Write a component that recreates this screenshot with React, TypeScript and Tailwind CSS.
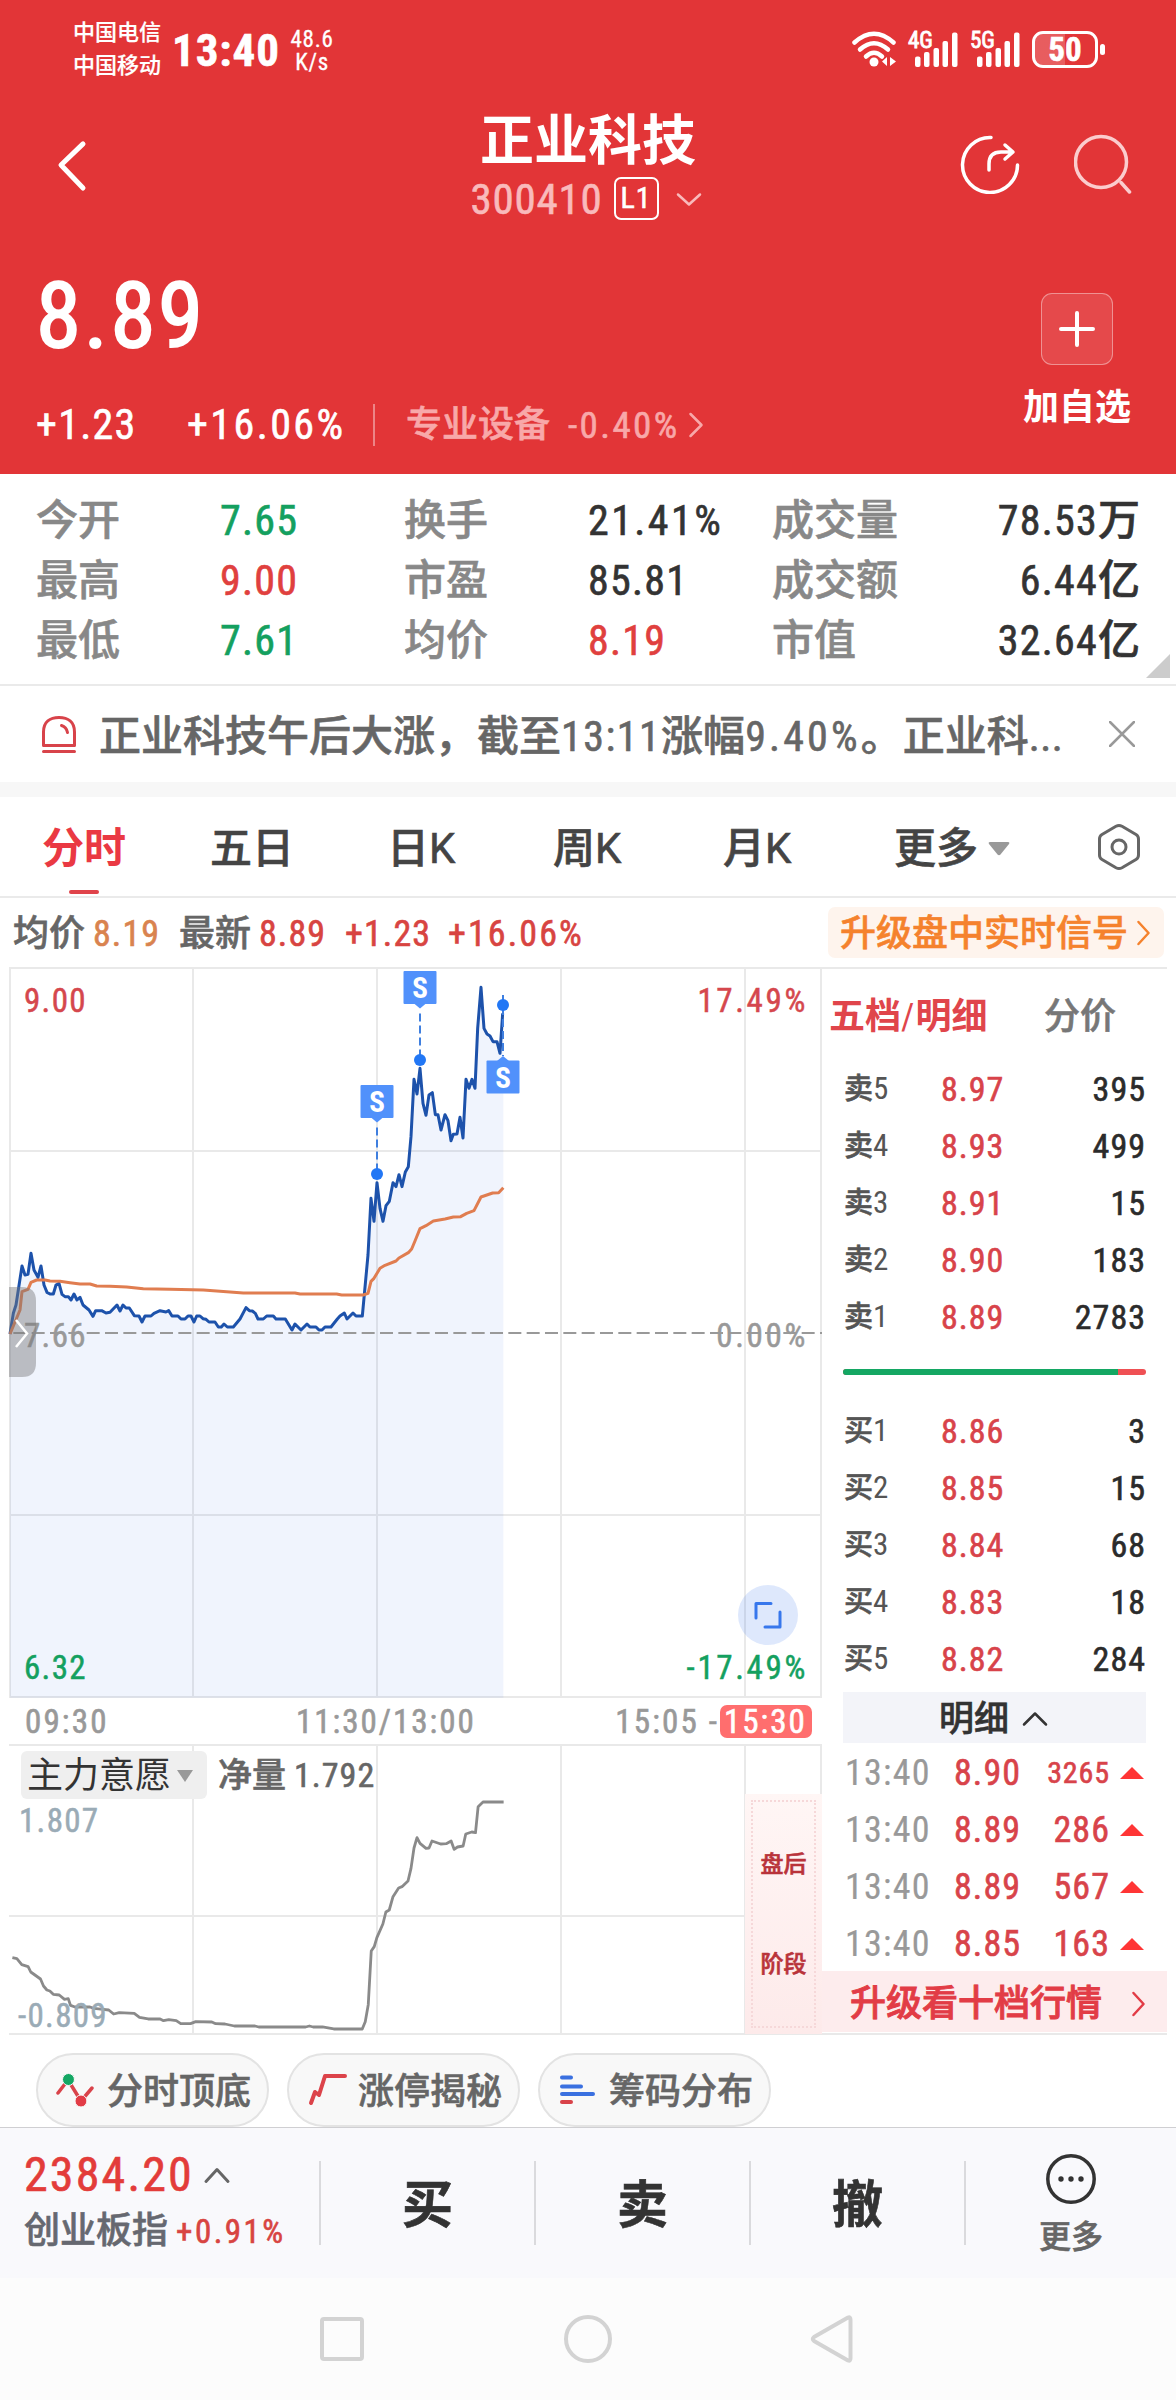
import type { ReactNode } from "react";

const stats = [
	["今开", "7.65", "text-[#14a05f]", "换手", "21.41%", "text-[#333]", "成交量", "78.53", "万"],
	["最高", "9.00", "text-[#e0403e]", "市盈", "85.81", "text-[#333]", "成交额", "6.44", "亿"],
	["最低", "7.61", "text-[#14a05f]", "均价", "8.19", "text-[#e0403e]", "市值", "32.64", "亿"],
];

const asks = [
	["5", "8.97", "395"],
	["4", "8.93", "499"],
	["3", "8.91", "15"],
	["2", "8.90", "183"],
	["1", "8.89", "2783"],
];

const bids = [
	["1", "8.86", "3"],
	["2", "8.85", "15"],
	["3", "8.84", "68"],
	["4", "8.83", "18"],
	["5", "8.82", "284"],
];

const trades = [
	["13:40", "8.90", "3265", "text-[30px]"],
	["13:40", "8.89", "286", "text-[36px]"],
	["13:40", "8.89", "567", "text-[36px]"],
	["13:40", "8.85", "163", "text-[36px]"],
];

// Series are kept in thirds of a pixel
const priceLine =
	"30,1122 40,1060 48,1035 66,918 75,945 84,943 93,880 102,930 114,952 123,918 132,975 141,997 150,1002 160,1002 168,975 177,970 186,1003 195,1010 205,1010 213,1020 222,1002 231,1020 240,1012 249,1035 267,1050 279,1069 287,1052 305,1052 318,1059 330,1057 351,1035 360,1053 369,1035 378,1044 388,1044 403,1067 417,1068 426,1086 435,1068 453,1068 462,1060 480,1052 498,1056 506,1052 516,1068 534,1068 543,1077 555,1077 564,1068 573,1068 582,1086 590,1068 600,1068 609,1076 618,1078 627,1086 645,1086 655,1101 664,1101 672,1092 682,1101 700,1101 720,1077 738,1043 748,1052 757,1053 766,1060 774,1077 790,1077 800,1068 820,1068 828,1077 856,1077 876,1110 885,1092 903,1110 921,1092 930,1101 948,1101 957,1110 966,1110 975,1101 993,1101 1012,1077 1020,1068 1033,1059 1041,1077 1059,1059 1068,1068 1087,1068 1104,885 1113,715 1122,784 1131,668 1140,745 1149,784 1158,737 1168,724 1179,668 1188,680 1197,644 1206,680 1216,636 1225,620 1233,530 1242,358 1251,402 1260,325 1269,430 1278,466 1287,405 1297,398 1306,464 1314,464 1323,510 1335,464 1344,482 1353,542 1360,523 1371,522 1380,472 1389,534 1398,358 1407,385 1416,358 1425,385 1433,205 1443,82 1452,205 1461,222 1470,228 1479,245 1491,245 1500,280 1508,160";

const averageLine =
	"30,1122 60,1050 66,995 84,988 93,967 110,960 135,960 150,963 180,964 210,968 240,972 270,972 290,978 330,979 380,981 430,986 510,988 610,990 680,995 730,999 885,999 900,1002 1010,1002 1025,1005 1090,1005 1104,1000 1113,964 1122,955 1140,925 1155,916 1188,903 1197,894 1225,878 1235,867 1245,843 1260,806 1278,797 1300,783 1335,777 1360,771 1382,770 1400,760 1422,752 1443,711 1478,699 1496,698 1510,683";

const netLine =
	"33,893 45,896 58,914 75,920 82,936 108,957 116,978 125,990 133,993 142,1003 158,1005 172,1018 182,1016 188,1036 200,1041 240,1041 250,1045 275,1048 290,1050 303,1062 318,1058 358,1060 372,1072 395,1077 427,1077 436,1082 450,1079 470,1082 482,1091 508,1091 522,1085 565,1086 575,1091 600,1092 625,1098 680,1098 690,1101 815,1101 825,1098 835,1101 860,1101 890,1107 966,1107 974,1085 982,1034 990,873 998,860 1005,833 1021,792 1029,756 1038,750 1048,710 1063,684 1072,680 1088,663 1096,625 1104,564 1112,533 1120,550 1136,565 1144,564 1152,543 1175,552 1190,551 1203,543 1211,568 1220,561 1235,558 1242,522 1258,516 1268,518 1275,440 1288,426 1343,426";

function Num({ className = "", tracking, children }: { className?: string; tracking?: string; children: ReactNode }) {
	const isPercent = typeof children === "string" && children.endsWith("%");
	const spacing = tracking ?? (isPercent ? "tracking-[0.058em]" : "tracking-[0.03em]");
	return <span className={`font-normal whitespace-nowrap ${spacing} ${className}`}>{children}</span>;
}

function Chevron({ d, className, width = 3 }: { d: string; className: string; width?: number }) {
	return (
		<svg viewBox="0 0 24 24" className={className} fill="none" stroke="currentColor" strokeWidth={width} strokeLinecap="round" strokeLinejoin="round" overflow="visible" preserveAspectRatio="none">
			<path d={d} vectorEffect="non-scaling-stroke" />
		</svg>
	);
}

const RIGHT = "M1 0L23 12L1 24";
const DOWN = "M0 1L12 23L24 1";
const UP = "M0 23L12 1L24 23";

function SignalBars() {
	return (
		<svg viewBox="0 0 44 36" className="h-9 w-11" fill="currentColor">
			<rect x="0" y="24.500" width="5.500" height="10.500" rx="2" />
			<rect x="9" y="20" width="5.500" height="15" rx="2" />
			<rect x="18.500" y="16" width="5.500" height="19" rx="2" />
			<rect x="27.500" y="9" width="5.500" height="26" rx="2" />
			<rect x="37" y="0.500" width="5.500" height="34.500" rx="2" />
		</svg>
	);
}

function StatusBar() {
	return (
		<div className="flex h-[100px] pl-[73px] text-white">
			<div className="mt-[16px] w-[99px] text-[22px] leading-[33px] font-medium [-webkit-text-stroke:0.2px]">
				<div>中国电信</div>
				<div>中国移动</div>
			</div>
			<div className="mt-[28px] w-[117px] text-[45px] leading-none font-bold tracking-[0.02em]">13:40</div>
			<div className="mt-[28px] w-[46px] text-center text-[23px] leading-[23px] tracking-[0.03em] [-webkit-text-stroke:0.3px]">
				<div>48.6</div>
				<div>K/s</div>
			</div>
			<svg viewBox="0 0 44 40" className="mt-[31px] ml-[517px] h-10 w-11" fill="none" stroke="currentColor" strokeWidth="4.500" strokeLinecap="round">
				<path d="M2.500 11.500Q22 -6 41.500 11.500" />
				<path d="M8 18.500Q22 6 36 18.500" />
				<path d="M14 25.500Q22 18 30 25.500" />
				<circle cx="22" cy="31" r="4.500" fill="currentColor" stroke="none" />
				<path d="M35 26v9l-5-4.500zM38 26v9l6-4.500z" fill="currentColor" stroke="none" />
			</svg>
			<div className="mt-[32px] ml-[12px] w-[7px] text-[23px] leading-[18px] whitespace-nowrap [-webkit-text-stroke:0.8px]">4G</div>
			<div className="mt-[32px]">
				<SignalBars />
			</div>
			<div className="mt-[32px] ml-[11px] w-[7px] text-[23px] leading-[18px] whitespace-nowrap [-webkit-text-stroke:0.8px]">5G</div>
			<div className="mt-[32px]">
				<SignalBars />
			</div>
			<div className="mt-[31px] ml-[11px] flex h-[37px] w-[66px] items-center justify-center rounded-[11px] border-[3px] border-white bg-linear-to-r from-white/20 from-50% to-transparent to-50% text-[33px] leading-none font-bold">
				50
			</div>
			<div className="mt-[44px] ml-[2px] h-[11px] w-[5px] rounded-full bg-white" />
		</div>
	);
}

function Header() {
	return (
		<header className="h-[474px] bg-[#e23537] text-white">
			<StatusBar />
			<div className="flex h-[140px] items-start justify-between">
				<div className="w-[300px]">
					<Chevron d="M23 1L1 12L23 24" className="mt-[42px] ml-[60px] h-[46px] w-[24px]" width={5} />
				</div>
				<div className="flex flex-col items-center">
					<h1 className="mt-[15px] text-[54px] leading-[53px] font-bold [-webkit-text-stroke:0]">正业科技</h1>
					<div className="mt-[7px] flex h-[48px] items-center text-[#f9babb]">
						<Num className="text-[43px] leading-none" tracking="tracking-[0.018em]">300410</Num>
						<span className="mb-[2px] ml-[11px] flex h-[43px] w-[45px] items-center justify-center rounded-[7px] border-2 border-white text-[30px] leading-none tracking-[0.03em] text-white">
							L1
						</span>
						<Chevron d={DOWN} className="mr-[6px] ml-[19px] h-[11px] w-[22px]" width={2.5} />
					</div>
				</div>
				<div className="flex w-[300px] justify-end gap-[54px] pr-[42px]">
					<svg viewBox="0 0 60 60" className="mt-[34px] h-[60px] w-[60px]" fill="none" stroke="currentColor" strokeWidth="3.500" strokeLinecap="round" strokeLinejoin="round">
						<path d="M31 3.500A27.500 27.500 0 1 0 57.500 31" />
						<path d="M29 36v-6q0-12 12-12h11M45 11l8 7-8 7" />
					</svg>
					<svg viewBox="0 0 60 60" className="mt-[34px] h-[60px] w-[60px] text-[#fbcccd]" fill="none" stroke="currentColor" strokeWidth="3.500" strokeLinecap="round">
						<circle cx="27" cy="28" r="25.500" />
						<path d="M47 48.500L55.500 58" />
					</svg>
				</div>
			</div>
			<div className="flex justify-between">
				<div className="pl-[36px]">
					<Num className="mt-[30px] block h-[91px] text-[91px] leading-[92px] [-webkit-text-stroke:2px]">8.89</Num>
					<div className="mt-[43px] flex h-[42px] items-center text-[42px] leading-none">
						<Num className="w-[151px]">+1.23</Num>
						<Num className="w-[186px]">+16.06%</Num>
						<span className="h-[42px] w-[2px] bg-white/40" />
						<span className="ml-[31px] text-[36px] font-medium text-[#f8a8a9]">专业设备</span>
						<Num className="ml-[18px] w-[122px] text-[37px] text-[#f8a8a9]" tracking="tracking-[0.065em]">-0.40%</Num>
						<Chevron d={RIGHT} className="h-[22px] w-[12px] text-[#f8a8a9]" width={2.5} />
					</div>
				</div>
				<div className="mr-[46px] flex w-[106px] flex-col items-center">
					<div className="mt-[53px] flex h-[72px] w-[72px] items-center justify-center rounded-[11px] border-[1.5px] border-white/40 bg-white/10">
						<svg viewBox="0 0 36 36" className="h-9 w-9" stroke="currentColor" strokeWidth="4" strokeLinecap="round">
							<path d="M18 2v32M2 18h32" />
						</svg>
					</div>
					<div className="mt-[25px] text-[36px] leading-[36px] font-bold whitespace-nowrap [-webkit-text-stroke:0]">加自选</div>
				</div>
			</div>
		</header>
	);
}

function Stats() {
	return (
		<section className="relative h-[212px] border-b-2 border-[#eaeaea] pt-[17px] pr-[36px] pl-[36px] text-[42px] leading-none font-medium">
			{stats.map((s) => (
				<div key={s[0]} className="grid h-[60px] grid-cols-[184px_184px_184px_184px_1fr] items-center">
					<span className="text-[#888]">{s[0]}</span>
					<Num className={s[2]}>{s[1]}</Num>
					<span className="text-[#888]">{s[3]}</span>
					<Num className={s[5]}>{s[4]}</Num>
					<span className="flex items-center justify-between">
						<span className="text-[#888]">{s[6]}</span>
						<span className="text-[#333]">
							<Num>{s[7]}</Num>
							{s[8]}
						</span>
					</span>
				</div>
			))}
			<svg viewBox="0 0 24 24" className="absolute right-[6px] bottom-[6px] h-6 w-6">
				<path d="M24 0V24H0z" fill="#ccc" />
			</svg>
		</section>
	);
}

function News() {
	return (
		<section className="flex h-[111px] items-center border-b-[15px] border-[#f7f7f7] pr-[41px] pl-[41px] text-[#666]">
			<svg viewBox="0 0 36 38" className="h-[38px] w-9" fill="none" stroke="#d8434a" strokeWidth="3" strokeLinecap="round" strokeLinejoin="round">
				<path d="M2.500 30.500V17C2.500 7 9 2.500 18 2.500S33.500 7 33.500 17v13.500z" />
				<path d="M20.500 10.500q5 1.500 6 7M2.500 36.500h31" />
			</svg>
			<span className="mt-[5px] ml-[22px] w-[964px] text-[42px] leading-none font-medium whitespace-nowrap">
				正业科技午后大涨，截至<Num tracking="tracking-[0.035em]">13:11</Num>涨幅<Num tracking="tracking-[0.075em]">9.40%</Num>。正业科
				<Num tracking="tracking-[0.01em]">...</Num>
			</span>
			<svg viewBox="0 0 26 26" className="ml-auto h-[26px] w-[26px]" stroke="#999" strokeWidth="2.500" strokeLinecap="round">
				<path d="M1 1L25 25M25 1L1 25" />
			</svg>
		</section>
	);
}

function Tabs() {
	return (
		<nav className="flex h-[101px] items-center border-b-2 border-[#eaeaea] pt-[5px] pr-[35px] pl-[42px] text-[42px] leading-none font-medium text-[#444]">
			<div className="relative w-[168px] font-bold text-[#ea3943] [-webkit-text-stroke:0]">
				分时
				<span className="absolute top-[62px] left-[27px] h-[4px] w-[30px] rounded-full bg-[#e0434a]" />
			</div>
			<div className="w-[177px]">五日</div>
			<div className="w-[166px]">
				日<Num tracking="tracking-normal" className="[font-stretch:100%]">K</Num>
			</div>
			<div className="w-[170px]">
				周<Num tracking="tracking-normal" className="[font-stretch:100%]">K</Num>
			</div>
			<div className="w-[171px]">
				月<Num tracking="tracking-normal" className="[font-stretch:100%]">K</Num>
			</div>
			<div className="flex items-center">
				更多
				<svg viewBox="0 0 22 14" className="ml-[10px] h-[14px] w-[22px]">
					<path d="M2 0H20Q22 0 21 2L12.500 12.500Q11 14 9.500 12.500L1 2Q0 0 2 0z" fill="#999" />
				</svg>
			</div>
			<svg viewBox="0 0 44 48" className="mb-[4px] ml-auto h-12 w-11" fill="none" stroke="#666" strokeWidth="3" strokeLinejoin="round">
				<path d="M19 3.200q3-1.600 6 0L39 11.500q2.500 1.500 2.500 4.500v16q0 3-2.500 4.500L25 44.800q-3 1.600-6 0L5 36.500Q2.500 35 2.500 32V16q0-3 2.500-4.500z" />
				<circle cx="22" cy="24" r="7" />
			</svg>
		</nav>
	);
}

function InfoRow() {
	return (
		<div className="flex h-[69px] items-center pl-[13px] text-[36px] leading-none font-medium text-[#d84441]">
			<span className="mt-[3px] w-[80px] text-[#666]">均价</span>
			<Num className="mt-[3px] w-[86px] text-[#d9834f]">8.19</Num>
			<span className="mt-[3px] w-[80px] text-[#666]">最新</span>
			<Num className="mt-[3px] w-[86px]">8.89</Num>
			<Num className="mt-[3px] w-[103px]">+1.23</Num>
			<Num className="mt-[3px]">+16.06%</Num>
			<div className="mr-[12px] ml-auto flex h-[51px] w-[336px] items-center rounded-[7px] bg-[#fef4ed] pt-[3px] pl-[12px] text-[#f5822d]">
				升级盘中实时信号
				<Chevron d={RIGHT} className="mb-[2px] ml-[10px] h-[22px] w-[11px]" width={2.5} />
			</div>
		</div>
	);
}

function Marker({ x, y, dot, flip }: { x: number; y: number; dot: number; flip?: boolean }) {
	return (
		<g>
			<path
				d={flip ? `M${x} ${dot - 10}V${y - 21}` : `M${x} ${y + 26}V${dot}`}
				stroke="#3f7fdf"
				strokeWidth="2"
				strokeDasharray="8 4"
			/>
			<rect x={x - 16.5} y={y - 16.500} width="33" height="33" rx="1" fill="#5191fb" />
			<path d={flip ? `M${x - 6} ${y - 16}l6-5l6 5z` : `M${x - 6} ${y + 16}l6 5l6-5z`} fill="#5191fb" />
			<text x={x} y={y + 10.5} textAnchor="middle" fill="#fff" className="text-[29px] font-bold [-webkit-text-stroke:0]">
				S
			</text>
			<circle cx={x} cy={dot} r="6" fill="#2277f5" />
		</g>
	);
}

function AxisLabel({ x = 24, y, color, children }: { x?: number; y: number; color: string; children: string }) {
	const isPercent = children.endsWith("%");
	return (
		<text
			x={x}
			y={y}
			fill={color}
			stroke={color}
			strokeWidth="0.5"
			textAnchor={isPercent ? "end" : "start"}
			className={isPercent ? "tracking-[0.08em]" : "tracking-[0.04em]"}
		>
			{children}
		</text>
	);
}

function PriceChart() {
	return (
		<svg viewBox="0 967 822 731" className="block h-[731px] w-[822px]" fill="none">
			<path d="M9 968H822M9 1151H822M9 1515H822M9 1697H822M10 967V1698M193 967V1698M377 967V1698M561 967V1698M745 967V1698M821 967V1698" stroke="#e9e9e9" strokeWidth="2" />
			<g transform="translate(0 960) scale(.33333)">
				<polygon points={`${priceLine} 1510,160 1510,2213 30,2213`} fill="#3c78e6" fillOpacity=".08" />
				<path d="M40 1119H2466" stroke="#999" strokeWidth="6" strokeDasharray="39 16" />
				<polyline points={priceLine} stroke="#1d52ab" strokeWidth="9" strokeLinejoin="round" />
				<polyline points={averageLine} stroke="#e07d50" strokeWidth="9" strokeLinejoin="round" />
			</g>
			<g className="text-[33px]">
				<AxisLabel y={1012} color="#d5474d">9.00</AxisLabel>
				<AxisLabel x={808} y={1012} color="#d5474d">17.49%</AxisLabel>
				<AxisLabel y={1347} color="#999">7.66</AxisLabel>
				<AxisLabel x={808} y={1347} color="#999">0.00%</AxisLabel>
				<AxisLabel y={1679} color="#14a05f">6.32</AxisLabel>
				<AxisLabel x={808} y={1679} color="#14a05f">-17.49%</AxisLabel>
			</g>
			<path d="M9 1287H22Q36 1287 36 1301V1363Q36 1377 22 1377H9z" fill="#77777b" fillOpacity=".45" />
			<path d="M16 1320L27 1333.500L16 1347" stroke="#fff" strokeWidth="2.500" />
			<Marker x={377} y={1101.5} dot={1174} />
			<Marker x={420} y={987.5} dot={1060} />
			<Marker x={503} y={1077} dot={1005} flip />
			<circle cx="768" cy="1615" r="30" fill="#3c78f0" fillOpacity=".17" />
			<path d="M756 1618V1603.500H771M765 1627H780V1612" stroke="#3777ec" strokeWidth="3" strokeLinecap="round" strokeLinejoin="round" />
		</svg>
	);
}

function TimeAxis() {
	return (
		<div className="flex h-[46px] items-center pr-[10px] pl-[25px] text-[33px] leading-none text-[#999]">
			<Num className="w-[271px]" tracking="tracking-[0.065em]">09:30</Num>
			<Num tracking="tracking-[0.06em]">11:30/13:00</Num>
			<Num className="ml-auto" tracking="tracking-[0.065em]">15:05 -</Num>
			<Num className="ml-[1px] flex h-[33px] w-[92px] items-center rounded-[7px] bg-[#ff6e6e] pl-[4px] text-white" tracking="tracking-[0.06em]">
				15:30
			</Num>
		</div>
	);
}

function NetChart() {
	return (
		<div className="relative h-[291px]">
			<svg viewBox="0 1744 822 291" className="block h-[291px] w-[822px]" fill="none">
				<path d="M9 1745H822M9 1916H745M9 2034H822M193 1744V2034M377 1744V2034M561 1744V2034M745 1744V2034M821 1744V2034" stroke="#e9e9e9" strokeWidth="2" />
				<g transform="translate(0 1660) scale(.375 .33333)">
					<polyline points={netLine} stroke="#8a8a8a" strokeWidth="2.800" vectorEffect="non-scaling-stroke" strokeLinejoin="round" />
				</g>
				<g className="text-[33px]">
					<AxisLabel x={19} y={1832} color="#9aabb6">1.807</AxisLabel>
					<AxisLabel x={18} y={2027} color="#9aabb6">-0.809</AxisLabel>
				</g>
			</svg>
			<div className="absolute top-[7px] left-[21px] flex h-[48px] items-center">
				<span className="flex h-[48px] w-[186px] items-center rounded-[6px] bg-[#efefef] pt-[2px] pl-[6px] text-[36px] leading-none text-[#333] [-webkit-text-stroke:0]">
					主力意愿
					<svg viewBox="0 0 16 12" className="ml-[6px] h-3 w-4">
						<path d="M0 0H16L8 12z" fill="#999" />
					</svg>
				</span>
				<span className="ml-[11px] text-[34px] leading-none font-medium text-[#666]">净量</span>
				<Num className="ml-[8px] text-[34px] leading-none text-[#666]">1.792</Num>
			</div>
			<div className="absolute top-[50px] left-[745px] h-[240px] w-[77px] bg-linear-to-b from-[#fff6f5] to-[#fdeaea] p-[6px]">
				<div className="flex h-full flex-col items-center border-2 border-dotted border-[#f6d8d9] text-[23px] leading-none font-medium text-[#b9333a]">
					<span className="mt-[51px]">盘后</span>
					<span className="mt-[77px]">阶段</span>
				</div>
			</div>
		</div>
	);
}

function BookRow({ side, row }: { side: string; row: string[] }) {
	return (
		<div className="flex h-[57px] items-center pr-[21px] pl-[22px] text-[34px] leading-none">
			<span className="w-[97px] text-[29px] font-medium text-[#555]">
				{side}
				<Num className="text-[31px] [-webkit-text-stroke:0]">{row[0]}</Num>
			</span>
			<Num className="text-[#d8434a]">{row[1]}</Num>
			<Num className="ml-auto text-[#2b2b2b]">{row[2]}</Num>
		</div>
	);
}

function OrderBook() {
	return (
		<aside className="w-[345px] border-y-2 border-[#e9e9e9] font-medium">
			<div className="flex h-[91px] items-center pt-[4px] pl-[7px] text-[36px] leading-none">
				<span className="w-[215px] font-bold text-[#e0454b] [-webkit-text-stroke:0]">
					五档<Num>/</Num>明细
				</span>
				<span className="text-[#777]">分价</span>
			</div>
			{asks.map((row) => (
				<BookRow key={row[0]} side="卖" row={row} />
			))}
			<div className="mt-[24px] mr-[21px] mb-[27px] ml-[21px] flex h-[6px] overflow-hidden rounded-full bg-[#ef5054]">
				<div className="w-[275px] bg-[#14a763]" />
			</div>
			{bids.map((row) => (
				<BookRow key={row[0]} side="买" row={row} />
			))}
			<div className="mx-[21px] mt-[5px] flex h-[51px] items-center justify-center bg-[#f3f4f9] pt-[3px] pr-[4px] text-[35px] leading-none text-[#333]">
				明细
				<Chevron d={UP} className="ml-[15px] h-[12px] w-[22px]" width={2.5} />
			</div>
			<div className="h-[228px] pt-[1px]">
				{trades.map(([time, price, volume, size], i) => (
					<div key={i} className="flex h-[57px] items-center pr-[23px] pl-[23px] text-[36px] leading-none text-[#d8434a]">
						<Num className="w-[109px] text-[#999] [-webkit-text-stroke:0.2px]" tracking="tracking-[0.035em]">{time}</Num>
						<Num>{price}</Num>
						<Num className={`ml-auto ${size}`}>{volume}</Num>
						<svg viewBox="0 0 24 12" className="ml-[10px] h-3 w-6">
							<path d="M12 0L24 12H0z" fill="#ff3535" />
						</svg>
					</div>
				))}
			</div>
			<div className="flex h-[61px] items-center bg-[#fdeced] pt-[4px] pr-[23px] pl-[28px] text-[36px] leading-none text-[#e23c46] [-webkit-text-stroke:0.9px]">
				升级看十档行情
				<Chevron d={RIGHT} className="ml-auto h-[22px] w-[11px]" width={2.5} />
			</div>
		</aside>
	);
}

function Pill({ icon, label }: { icon: ReactNode; label: string }) {
	return (
		<div className="flex h-[74px] w-[233px] items-center rounded-full border-2 border-[#e3e3e3] bg-[#f8f8f8] pl-[18px] text-[36px] leading-none font-medium text-[#666]">
			<svg viewBox="0 0 40 48" className="mr-[11px] h-12 w-10" fill="none" strokeLinecap="round" strokeLinejoin="round">
				{icon}
			</svg>
			<span className="pt-[3px]">{label}</span>
		</div>
	);
}

function Pills() {
	return (
		<div className="flex h-[92px] items-end gap-[18px] pl-[36px]">
			<Pill
				label="分时顶底"
				icon={
					<>
						<path d="M2 27L12 14L25 35L36 22" stroke="#d9434a" strokeWidth="3.500" />
						<circle cx="12.500" cy="13.500" r="6" fill="#14a763" stroke="#f8f8f8" />
						<circle cx="25" cy="35" r="6" fill="#e23c46" stroke="#f8f8f8" />
					</>
				}
			/>
			<Pill label="涨停揭秘" icon={<path d="M4 37L8 26L12 29L18 10H38" stroke="#dc434a" strokeWidth="4" />} />
			<Pill
				label="筹码分布"
				icon={
					<g strokeWidth="4">
						<path d="M4 11.500H13M4 20.500H23M4 28H35" stroke="#3a70e0" />
						<path d="M4 36H13" stroke="#d9434a" />
					</g>
				}
			/>
		</div>
	);
}

function TradeBar() {
	return (
		<footer className="flex h-[151px] items-center border-t border-[#cfcfd2] bg-[#f9f9fc] leading-none">
			<div className="h-full w-[319px] pl-[24px]">
				<div className="mt-[23px] flex h-[48px] items-center text-[#e33c3a]">
					<Num className="text-[48px]" tracking="tracking-[0.045em]">2384.20</Num>
					<Chevron d={UP} className="ml-[12px] h-[13px] w-[22px] text-[#666]" width={3} />
				</div>
				<div className="mt-[12px] flex h-[40px] items-center text-[36px] font-medium text-[#666870]">
					创业板指
					<Num className="ml-[8px] text-[33px] text-[#d84441]" tracking="tracking-[0.075em]">+0.91%</Num>
				</div>
			</div>
			{["买", "卖", "撤"].map((label) => (
				<div key={label} className="flex h-[84px] w-[215px] items-center justify-center border-l-2 border-[#dadadd] pt-[4px] text-[51px] font-bold text-[#333]">
					{label}
				</div>
			))}
			<div className="flex h-[84px] flex-1 flex-col items-center justify-center border-l-2 border-[#dadadd]">
				<svg viewBox="0 0 50 50" className="h-[50px] w-[50px] shrink-0" fill="#333">
					<circle cx="25" cy="25" r="23.200" fill="none" stroke="#333" strokeWidth="3.500" />
					<circle cx="15" cy="25" r="2.700" />
					<circle cx="25" cy="25" r="2.700" />
					<circle cx="35" cy="25" r="2.700" />
				</svg>
				<span className="mt-[17px] shrink-0 text-[32px] font-medium text-[#666]">更多</span>
			</div>
		</footer>
	);
}

function SystemNav() {
	return (
		<div className="flex h-[122px] items-center bg-[#fcfcfc] pl-[320px]">
			<div className="h-[44px] w-[44px] rounded-[4px] border-4 border-[#d3d3d3]" />
			<div className="ml-[200px] h-[48px] w-[48px] rounded-full border-4 border-[#d3d3d3]" />
			<svg viewBox="0 0 44 48" className="ml-[198px] h-12 w-11" fill="none" stroke="#d3d3d3" strokeWidth="4" strokeLinejoin="round">
				<path d="M38 2.500Q40.500 1.500 40.500 5V43Q40.500 46.500 38 45.500L4 26Q1.500 24 4 22z" />
			</svg>
		</div>
	);
}

export default function App() {
	return (
		<div className="h-[2400px] w-[1176px] overflow-hidden bg-white font-['Roboto','Noto_Sans_CJK_SC',sans-serif] [font-stretch:75%] [-webkit-text-stroke:0.6px]">
			<Header />
			<Stats />
			<News />
			<Tabs />
			<InfoRow />
			<main className="flex h-[1068px]">
				<div className="w-[822px]">
					<PriceChart />
					<TimeAxis />
					<NetChart />
				</div>
				<OrderBook />
			</main>
			<Pills />
			<TradeBar />
			<SystemNav />
		</div>
	);
}
